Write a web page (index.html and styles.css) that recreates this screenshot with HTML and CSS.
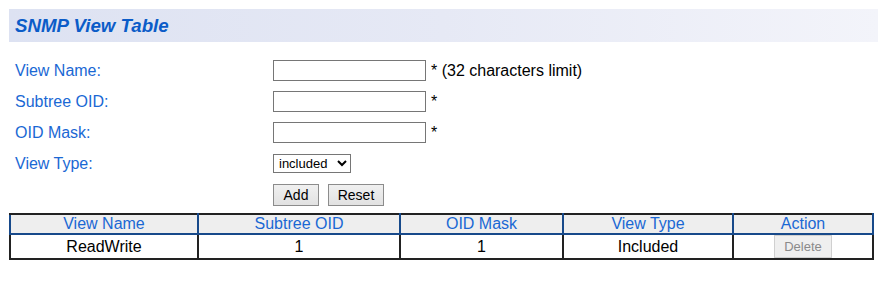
FILE: index.html
```html
<!DOCTYPE html>
<html lang="en">
<head>
    <meta charset="UTF-8">
    <title>SNMP View Table</title>
    <link rel="stylesheet" href="styles.css">
</head>
<body>
    <!-- title bar -->
    <div class="title-bar">
        <h1>SNMP View Table</h1>
    </div>

    <!-- input form -->
    <form class="view-form" onsubmit="return false;">
        <label for="view-name">View Name:</label>
        <div class="field">
            <input type="text" id="view-name" class="text-input">
            <span class="note">* (32 characters limit)</span>
        </div>

        <label for="subtree-oid">Subtree OID:</label>
        <div class="field">
            <input type="text" id="subtree-oid" class="text-input">
            <span class="note">*</span>
        </div>

        <label for="oid-mask">OID Mask:</label>
        <div class="field">
            <input type="text" id="oid-mask" class="text-input">
            <span class="note">*</span>
        </div>

        <label for="view-type">View Type:</label>
        <div class="field">
            <select id="view-type" class="type-select">
                <option>included</option>
                <option>excluded</option>
            </select>
        </div>

        <span></span>
        <div class="field buttons">
            <button type="button" class="btn btn-add">Add</button>
            <button type="reset" class="btn btn-reset">Reset</button>
        </div>
    </form>

    <!-- view list -->
    <table class="view-table">
        <thead>
            <tr>
                <th class="col-name">View Name</th>
                <th class="col-oid">Subtree OID</th>
                <th class="col-mask">OID Mask</th>
                <th class="col-type">View Type</th>
                <th>Action</th>
            </tr>
        </thead>
        <tbody>
            <tr>
                <td>ReadWrite</td>
                <td>1</td>
                <td>1</td>
                <td>Included</td>
                <td><button type="button" class="btn-delete" disabled>Delete</button></td>
            </tr>
        </tbody>
    </table>
</body>
</html>
```

FILE: styles.css
```css
/* base */
body {
    font-family: 'Liberation Sans', Arial, sans-serif;
    margin: 9px 6px 0 9px;
    color: #000;
    background: #fff;
}

/* title bar */
.title-bar {
    height: 33px;
    display: flex;
    align-items: center;
    padding-left: 6px;
    background: linear-gradient(to right, #dde2f2, #e6e9f5 50%, #f3f4fa);
}

.title-bar h1 {
    margin: 0;
    font-size: 18.7px;
    font-weight: bold;
    font-style: italic;
    color: #0b5cc8;
}

/* form */
.view-form {
    display: grid;
    grid-template-columns: 264px 1fr;
    grid-auto-rows: 31px;
    margin-top: 13px;
    font-size: 16px;
}

.view-form label {
    display: flex;
    align-items: center;
    padding-left: 6px;
    color: #1a68d4;
}

.field {
    display: flex;
    align-items: center;
}

.text-input {
    width: 153px;
    height: 21px;
    box-sizing: border-box;
    border: 1px solid #767676;
    margin: 0;
    padding: 1px 3px;
    font-size: 13px;
}

.note {
    margin-left: 5px;
}

.type-select {
    width: 78px;
    height: 19px;
    box-sizing: border-box;
    border: 1px solid #767676;
    border-radius: 0;
    margin: 0;
    padding: 0 0 0 1px;
    font-family: 'Liberation Sans', Arial, sans-serif;
    font-size: 13px;
    background: #fff;
}

.buttons {
    gap: 9px;
}

.btn {
    height: 22px;
    padding: 0;
    margin: 0;
    font-family: 'Liberation Sans', Arial, sans-serif;
    font-size: 14px;
    color: #000;
    background: linear-gradient(to bottom, #f0f0f0, #e2e2e2);
    border: 1px solid #8c8c8c;
    border-radius: 0;
}

.btn-add { width: 46px; }
.btn-reset { width: 56px; }

/* table */
.view-table {
    width: 865px;
    margin-top: 3px;
    border-collapse: collapse;
    font-size: 16px;
}

.view-table th,
.view-table td {
    text-align: center;
    padding: 0;
}

.view-table th {
    height: 18px;
    font-weight: normal;
    color: #1a68d4;
    background: #eeeeee;
    border: 2px solid #17498a;
    border-top-color: #222;
    line-height: 16px;
}

.view-table td {
    height: 23px;
    border: 2px solid #222;
}

.col-name { width: 186px; }
.col-oid { width: 200px; }
.col-mask { width: 161px; }
.col-type { width: 168px; }

.btn-delete {
    width: 58px;
    height: 23px;
    margin: 0;
    padding: 0;
    font-family: 'Liberation Sans', Arial, sans-serif;
    font-size: 13px;
    color: #8a8a8a;
    background: #efefef;
    border: 1px solid #d0d0d0;
    border-radius: 0;
    vertical-align: middle;
}
```
